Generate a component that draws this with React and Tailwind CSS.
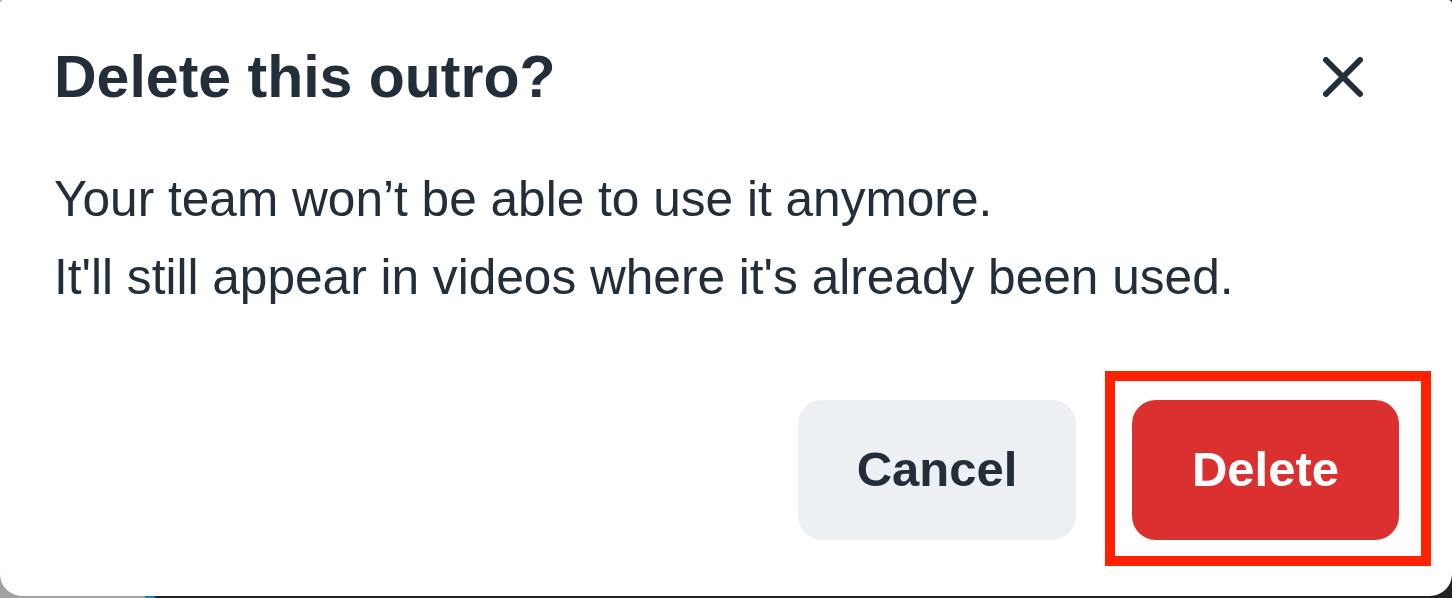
import React from "react";

const CloseIcon = () => (
  <svg width="40" height="40" viewBox="0 0 40 40" fill="none">
    <path d="M3 3L37 37M37 3L3 37" stroke="#222e3a" strokeWidth="6" strokeLinecap="round" />
  </svg>
);

const App = () => {
  return (
    <div
      className="relative h-[598px] w-full overflow-hidden bg-[linear-gradient(to_right,#a2a2a2_0,#a2a2a2_145px,#1d7fb8_145px,#1d7fb8_155px,#232323_155px)]"
      style={{ fontFamily: '"Liberation Sans", Arial, sans-serif' }}
    >
      {/* Dialog */}
      <div className="flex h-[596px] flex-col rounded-b-[22px] rounded-t-[4px] bg-white pl-[54px] pr-[53px] text-[#222e3a]">
        {/* Header */}
        <div className="mt-[42px] flex items-center justify-between">
          <h2 className="text-[59px] font-bold leading-[70px]">Delete this outro?</h2>
          <button className="mr-[26px] flex h-[60px] w-[60px] items-center justify-center">
            <CloseIcon />
          </button>
        </div>

        {/* Body */}
        <div className="mt-[48px] text-[49.6px] leading-[78px]">
          <p>Your team won’t be able to use it anymore.</p>
          <p>It'll still appear in videos where it's already been used.</p>
        </div>

        {/* Actions */}
        <div className="mt-auto mb-[56px] flex justify-end gap-[56px]">
          <button className="h-[140px] w-[278px] rounded-[24px] bg-[#edf0f3] text-[49px] font-bold text-[#222e3a]">
            Cancel
          </button>
          <button className="h-[140px] w-[267px] rounded-[24px] bg-[#db3030] text-[49px] font-bold text-white">
            Delete
          </button>
        </div>
      </div>

      {/* Annotation highlight */}
      <div className="pointer-events-none absolute left-[1105px] top-[371px] h-[195px] w-[326px] border-[10px] border-[#ff2200]" />
    </div>
  );
};

export default App;
